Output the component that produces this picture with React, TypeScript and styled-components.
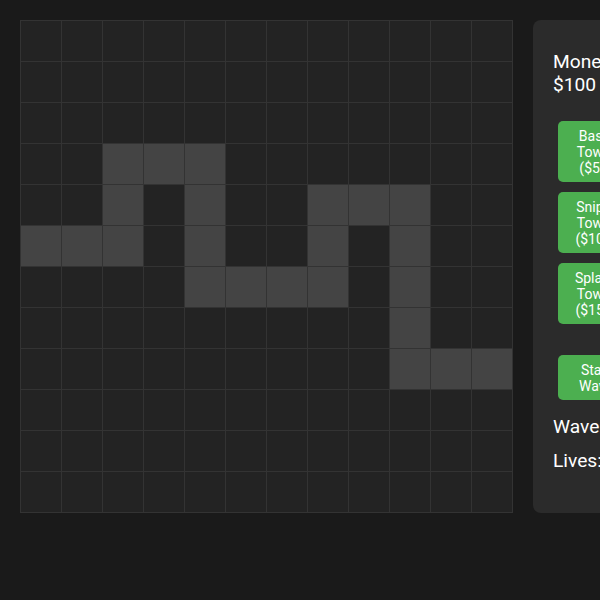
import React from "react";
import styled, { createGlobalStyle } from "styled-components";

const GlobalStyle = createGlobalStyle`
  html, body {
    margin: 0;
    padding: 0;
    background: #1a1a1a;
    overflow: hidden;
  }
  body {
    font-family: Roboto, "Liberation Sans", Arial, sans-serif;
    color: #ffffff;
  }
`;

const Page = styled.div`
  display: flex;
  align-items: stretch;
  gap: 20px;
  padding: 20px;
  width: max-content;
`;

const Board = styled.div`
  display: grid;
  grid-template-columns: repeat(12, 40px);
  grid-auto-rows: 40px;
  gap: 1px;
  padding: 1px;
  background: #333333;
  flex-shrink: 0;
`;

const Cell = styled.div<{ $path: boolean }>`
  background: ${(p) => (p.$path ? "#444444" : "#232323")};
`;

const Panel = styled.div`
  box-sizing: border-box;
  width: 126px;
  flex-shrink: 0;
  padding: 20px;
  background: #2b2b2b;
  border-radius: 8px;
  display: flex;
  flex-direction: column;
`;

const Stat = styled.div<{ $mt: number }>`
  margin-top: ${(p) => p.$mt}px;
  font-size: 19.2px;
  line-height: normal;
  color: #ffffff;
`;

const TowerList = styled.div`
  margin-top: 25px;
  display: flex;
  flex-direction: column;
  gap: 10px;
`;

const ActionButton = styled.button<{ $mt?: number }>`
  margin: ${(p) => p.$mt ?? 0}px 5px 0;
  padding: 6.5px 16px;
  border: none;
  border-radius: 5px;
  background: #4caf50;
  color: #ffffff;
  font-family: Roboto, "Liberation Sans", Arial, sans-serif;
  font-size: 14px;
  line-height: normal;
  text-align: center;
  cursor: pointer;
`;

const PATH: [number, number][] = [
  [5, 0], [5, 1], [5, 2], [4, 2], [3, 2], [3, 3], [3, 4], [4, 4], [5, 4],
  [6, 4], [6, 5], [6, 6], [6, 7], [5, 7], [4, 7], [4, 8], [4, 9], [5, 9],
  [6, 9], [7, 9], [8, 9], [8, 10], [8, 11],
];

const pathSet = new Set(PATH.map(([r, c]) => `${r}-${c}`));

const towers = [
  { name: "Basic Tower", cost: 50 },
  { name: "Sniper Tower", cost: 100 },
  { name: "Splash Tower", cost: 150 },
];

export default function App() {
  const cells = [];
  for (let r = 0; r < 12; r++) {
    for (let c = 0; c < 12; c++) {
      cells.push(<Cell key={`${r}-${c}`} $path={pathSet.has(`${r}-${c}`)} />);
    }
  }
  return (
    <>
      <GlobalStyle />
      <Page>
        <Board>{cells}</Board>
        <Panel>
          <Stat $mt={10}>Money: $100</Stat>
          <TowerList>
            {towers.map((t) => (
              <ActionButton key={t.name}>
                {t.name} (${t.cost})
              </ActionButton>
            ))}
          </TowerList>
          <ActionButton $mt={31}>Start Wave</ActionButton>
          <Stat $mt={15}>Wave: 1</Stat>
          <Stat $mt={11}>Lives: 10</Stat>
        </Panel>
      </Page>
    </>
  );
}
